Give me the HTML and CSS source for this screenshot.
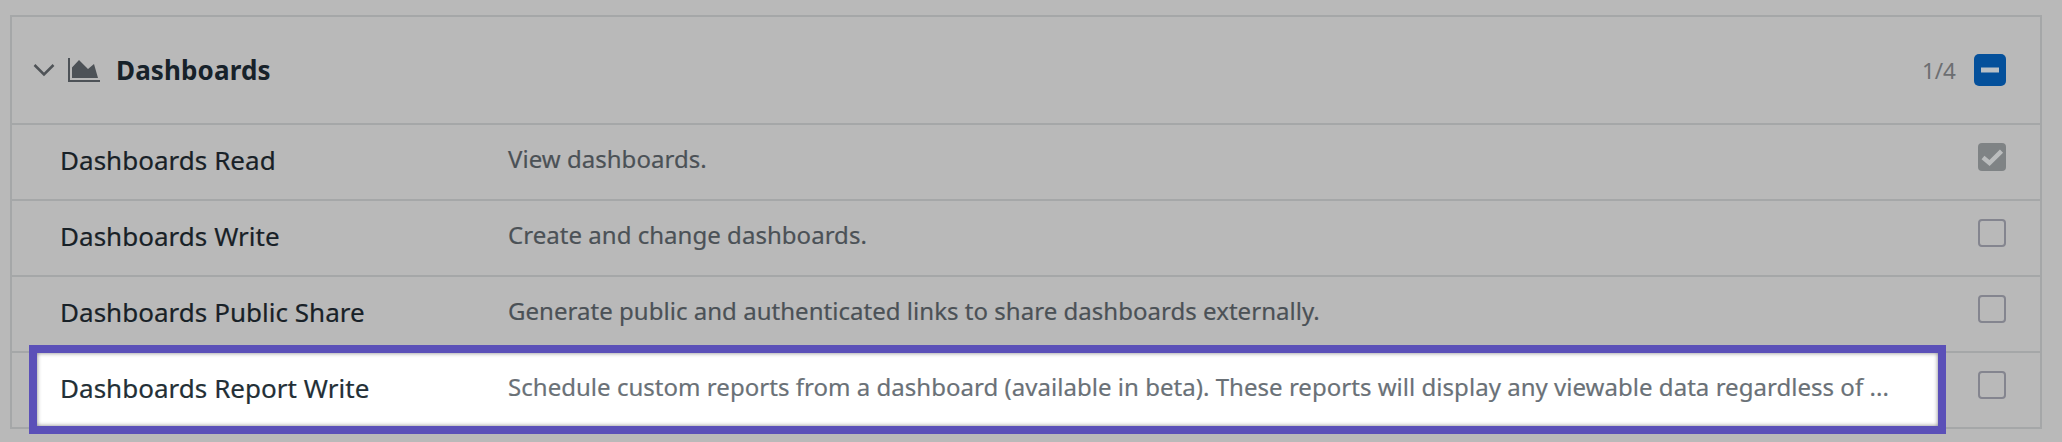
FILE: index.html
```html
<!DOCTYPE html>
<html lang="en">
<head>
<meta charset="utf-8">
<title>Dashboards permissions</title>
<link rel="stylesheet" href="styles.css">
</head>
<body>
<main class="permissions">
  <header class="group">
    <svg class="chevron" width="22" height="14" viewBox="0 0 22 14"><path d="M1.500 2 11 11.500 20.500 2"/></svg>
    <svg class="chart" width="32" height="24" viewBox="0 0 32 24"><path d="M0 0h2v22h30v2H0zM4 20V9.500L11 2l9 9 6-5 4 14z"/></svg>
    <h1 class="title"><span class="title-text">Dashboards</span></h1>
    <span class="count"><span class="count-text">1/4</span></span>
    <span class="check check-mixed"><svg width="32" height="32" viewBox="0 0 32 32"><path d="M7 13.500h18v5H7z"/></svg></span>
  </header>
  <section class="row">
    <span class="name"><span class="name-text">Dashboards Read</span></span>
    <span class="desc"><span class="desc-text">View dashboards.</span></span>
    <span class="check check-on"><svg width="28" height="28" viewBox="0 0 28 28"><path d="m5 14.500 6.500 5.500L23.500 8.200"/></svg></span>
  </section>
  <section class="row">
    <span class="name"><span class="name-text">Dashboards Write</span></span>
    <span class="desc"><span class="desc-text">Create and change dashboards.</span></span>
    <span class="check"></span>
  </section>
  <section class="row">
    <span class="name"><span class="name-text">Dashboards Public Share</span></span>
    <span class="desc"><span class="desc-text">Generate public and authenticated links to share dashboards externally.</span></span>
    <span class="check"></span>
  </section>
  <section class="row row-active">
    <span class="spotlight"></span>
    <span class="name"><span class="name-text">Dashboards Report Write</span></span>
    <span class="desc"><span class="desc-text">Schedule custom reports from a dashboard (available in beta). These reports will display any viewable data regardless of ...</span></span>
    <span class="check"></span>
  </section>
</main>
</body>
</html>
```
FILE: styles.css
```css
* { box-sizing: border-box; }

body {
  margin: 0;
  padding: 15px 20px 13px 10px;
  background: #b9b9b9;
  font-family: "Noto Sans", sans-serif;
  color: #182127;
}

.permissions { border: 2px solid #a5a7a8; }

.group {
  display: flex;
  height: 108px;
  padding: 0 34px 0 21px;
  align-items: center;
  border-bottom: 2px solid #a5a7a8;
}

.chevron {
  fill: none;
  stroke: #4f5357;
  stroke-width: 2.5;
}

.chart {
  margin-left: 13px;
  fill: #4d5257;
}

.title {
  margin: 0 auto 0 16px;
  font-size: 26px;
  line-height: 36px;
  font-weight: 700;
  letter-spacing: .12px;
  color: #17222a;
}

.count {
  margin: 2px 18px 0 0;
  font-size: 22.5px;
  line-height: 32px;
  color: #6c6e71;
}

.row {
  position: relative;
  display: flex;
  height: 76px;
  padding: 16px 34px 0 48px;
  align-items: flex-start;
  border-bottom: 2px solid #a5a7a8;
}

.row:last-child {
  height: 74px;
  border-bottom: 0;
}

.name {
  width: 448px;
  padding-top: 1px;
  font-size: 26px;
  line-height: 36px;
  letter-spacing: .03px;
  white-space: nowrap;
  -webkit-text-stroke: .2px;
}

.desc {
  flex: 1;
  font-size: 24px;
  line-height: 36px;
  letter-spacing: .033px;
  white-space: nowrap;
  color: #4b5156;
  -webkit-text-stroke: .2px;
}

.check {
  display: block;
  flex: none;
  width: 28px;
  height: 28px;
  margin-top: 2px;
  border: 2px solid #84858f;
  border-radius: 4px;
}

.check svg { display: block; }

.check-mixed {
  width: 32px;
  height: 32px;
  margin-top: 0;
  border: 0;
  border-radius: 5px;
  background: #04509b;
  fill: #b9c0c6;
}

.check-on {
  border: 0;
  background: #7f8385;
  fill: none;
  stroke: #bbbdbe;
  stroke-width: 4.5;
}

/* Highlighted row sits above the dimmed table and its borders */
.spotlight {
  position: absolute;
  top: -8px;
  left: 17px;
  width: 1917px;
  height: 89px;
  border: 8px solid #5b50b8;
  background: #fff;
  box-shadow: inset 0 0 4px rgba(0, 0, 0, .5);
}

.row-active .name,
.row-active .desc { position: relative; }

.row-active .name { color: #232f36; }

.row-active .desc { color: #6a7177; }
```
